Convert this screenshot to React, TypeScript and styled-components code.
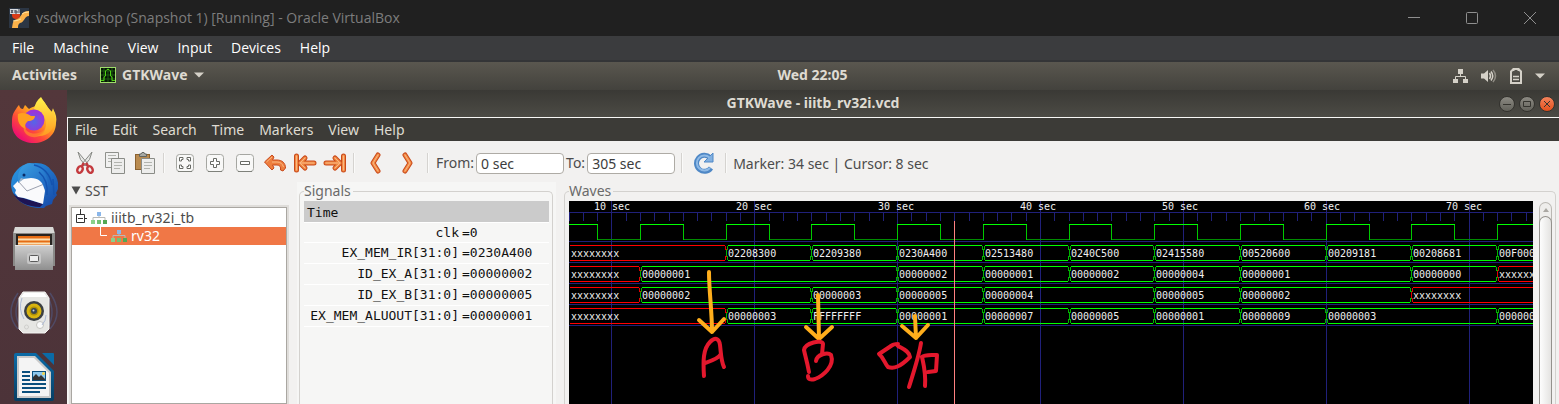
import React from 'react';
import styled, { createGlobalStyle, css } from 'styled-components';

const segoe = `"Open Sans", "Noto Sans", sans-serif`;
const ubuntu = `"Noto Sans", "Open Sans", sans-serif`;
const mono = `"DejaVu Sans Mono", monospace`;

const GlobalStyle = createGlobalStyle`
  * { box-sizing: border-box; }
  html, body { margin: 0; height: 100%; background: #f2f1f0; }
  body { overflow: hidden; }
  button, input { font: inherit; color: inherit; }
`;

const Desktop = styled.div`
  display: flex;
  flex-direction: column;
  height: 100vh;
  font-family: ${ubuntu};
  font-size: 14px;
`;

/* Host window */

const HostTitle = styled.header`
  display: flex;
  align-items: center;
  flex: none;
  height: 36px;
  padding-left: 9px;
  background: #202020;
  color: #7d7d7d;
  font: 14px/20px ${segoe};
`;

const HostName = styled.h1`
  flex: 1;
  margin: 0 0 0 7px;
  font: inherit;
`;

const HostControl = styled.button`
  display: grid;
  place-items: center;
  width: 58px;
  height: 34px;
  padding: 0;
  border: 0;
  background: none;
  color: #8f8f8f;
`;

const HostMenu = styled.nav`
  display: flex;
  align-items: center;
  flex: none;
  gap: 19px;
  height: 26px;
  padding: 0 12px;
  background: #3b3c3e;
  border-bottom: 2px solid #343537;
  color: #fff;
  font: 14px/20px ${segoe};
`;

const MenuButton = styled.button`
  padding: 0;
  border: 0;
  background: none;
  line-height: 20px;
`;

/* GNOME top panel */

const Panel = styled.div`
  display: flex;
  align-items: center;
  flex: none;
  height: 28px;
  background: linear-gradient(#5a574f, #43423d);
  color: #dfdbd2;
  font-weight: 700;
`;

const PanelStart = styled.div`
  display: flex;
  align-items: center;
  flex: 1 1 80px;
  gap: 23px;
  padding-left: 12px;
`;

const PanelButton = styled.button`
  display: flex;
  align-items: center;
  gap: 6px;
  padding: 0;
  border: 0;
  background: none;
  line-height: 18px;
  padding-bottom: 2px;
`;

const PanelEnd = styled.div`
  display: flex;
  align-items: center;
  justify-content: flex-end;
  flex: 1 1 14px;
  gap: 13px;
  padding-right: 14px;
`;

const Workspace = styled.div`
  display: flex;
  flex: 1;
  min-height: 0;
`;

const Launcher = styled.nav`
  display: flex;
  flex-direction: column;
  align-items: center;
  flex: none;
  gap: 16px;
  width: 67px;
  padding-top: 7px;
  background: linear-gradient(#53373b, #4c3339);
  overflow: hidden;
`;

const LaunchButton = styled.button`
  flex: none;
  width: 48px;
  height: 48px;
  padding: 0;
  border: 0;
  background: none;
`;

/* Application window */

const Window = styled.main`
  display: flex;
  flex-direction: column;
  flex: 1;
  min-width: 0;
`;

const TitleBar = styled.div`
  display: flex;
  align-items: center;
  flex: none;
  height: 27px;
  padding-right: 4px;
  background: linear-gradient(#3a3935, #4c4b45);
`;

const WindowTitle = styled.h2`
  flex: 1;
  margin: 0;
  padding: 0 0 2px 64px;
  color: #dfdbd2;
  font: 700 14px/20px ${ubuntu};
  text-align: center;
`;

const RoundButton = styled.button<{ $close?: boolean }>`
  display: grid;
  place-items: center;
  width: 16px;
  height: 16px;
  margin-left: 4px;
  padding: 0;
  border: 1px solid #33322e;
  border-radius: 50%;
  background: ${p => (p.$close ? 'linear-gradient(#f4835c, #e2501c)' : 'linear-gradient(#8b8982, #63625b)')};
  color: #35342f;
`;

const Client = styled.div`
  display: flex;
  flex-direction: column;
  flex: 1;
  min-height: 0;
  border: solid #f8f8f6;
  border-width: 1px 0 0 1px;
  background: #f2f1f0;
  color: #4c4c4c;
`;

const AppMenu = styled.nav`
  display: flex;
  align-items: center;
  flex: none;
  gap: 15px;
  height: 23px;
  padding-left: 7px;
  background: #3c3b37;
  color: #dfdbd2;
`;

const Toolbar = styled.div`
  display: flex;
  align-items: center;
  flex: none;
  height: 41px;
  padding: 3px 0 0 2px;
`;

const ToolButton = styled.button<{ $wide?: boolean }>`
  display: grid;
  place-items: center;
  flex: none;
  width: ${p => (p.$wide ? 32 : 30)}px;
  height: 30px;
  padding: 0;
  border: 0;
  background: none;
`;

const Divider = styled.span<{ $spaced?: boolean }>`
  flex: none;
  width: 2px;
  height: 20px;
  margin: ${p => (p.$spaced ? '0 6px' : '0 5px 0 3px')};
  border-left: 1px solid #d5d3d0;
  border-right: 1px solid #fafaf9;
`;

const RangeLabel = styled.label`
  display: flex;
  align-items: center;
  margin-left: 2px;
  line-height: 20px;
`;

const RangeInput = styled.input`
  width: 88px;
  height: 21px;
  margin-left: 2px;
  padding: 0 4px;
  border: 1px solid #aeaba5;
  border-radius: 4px;
  background: #fff;
  color: #3c3c3c;
  outline: none;
`;

const Status = styled.output`
  white-space: pre;
`;

const Panes = styled.div`
  display: flex;
  flex: 1;
  min-height: 0;
`;

const TreePane = styled.section`
  display: flex;
  flex-direction: column;
  flex: none;
  width: 229px;
  padding: 0 10px 0 3px;
`;

const TreeHeading = styled.button`
  display: flex;
  align-items: center;
  gap: 4px;
  height: 19px;
  padding: 0 0 2px;
  border: 0;
  background: none;
`;

const Tree = styled.ul`
  flex: 1;
  margin: 6px 0 0;
  padding: 1px 0 0;
  border: 1px solid #aaa7a2;
  outline: 2px solid #dfddda;
  background: #fff;
  list-style: none;
`;

const TreeItem = styled.button<{ $selected?: boolean }>`
  display: flex;
  align-items: center;
  gap: 4px;
  width: 100%;
  height: 18px;
  padding: 0 0 0 4px;
  border: 0;
  background: none;
  line-height: 18px;
  ${p =>
    p.$selected &&
    css`
      padding-left: 27px;
      background: #f07746;
      color: #fff;
    `}
`;

const SignalPane = styled.section`
  display: flex;
  flex: none;
  width: 259px;
  padding: 0 3px 0 2px;
  background: #f6f6f5;
`;

const WavePane = styled.section`
  display: flex;
  flex: 1;
  min-width: 0;
  padding: 0 3px 0 8px;
`;

const Frame = styled.fieldset`
  flex: 1;
  min-width: 0;
  margin: 0;
  padding: 0 3px 0 4px;
  border: 1px solid #d3d1ce;
  border-bottom: 0;
  border-radius: 5px 5px 0 0;
`;

const Legend = styled.legend`
  height: 19px;
  padding: 0 2px 0 0;
  color: #6a6a6a;
  line-height: 17px;
`;

const SignalTable = styled.table`
  width: 100%;
  border-collapse: collapse;
  color: #111;
  font: 13px/18px ${mono};
`;

const TimeHead = styled.th`
  height: 21px;
  padding: 3px 3px 0;
  border-bottom: 1px solid #fff;
  background: #cbcbcb;
  font-weight: 400;
  text-align: left;
`;

const SignalRow = styled.tr<{ $first?: boolean }>`
  height: ${p => (p.$first ? 20 : 21)}px;
  border-bottom: 1px solid #fff;
`;

const SignalName = styled.th`
  width: 155px;
  padding: 0;
  font-weight: 400;
  text-align: right;
`;

const SignalValue = styled.td`
  padding: 0 0 0 3px;
`;

const WaveBody = styled.div`
  display: flex;
  height: calc(100vh - 201px);
`;

const Canvas = styled.svg`
  display: block;
  flex: 1;
  min-width: 0;
  height: 100%;
  background: #000;
`;

const ScrollTrack = styled.div`
  display: flex;
  flex-direction: column;
  flex: none;
  width: 13px;
  margin: 1px 0 0 6px;
  border: 1px solid #bbb8b3;
  border-bottom: 0;
  border-radius: 7px 7px 0 0;
  background: #eeedeb;
`;

const ScrollUp = styled.button`
  display: grid;
  place-items: center;
  height: 13px;
  padding: 0;
  border: 0;
  background: none;
`;

const ScrollThumb = styled.div`
  flex: 1;
  margin: 0 -1px;
  border: 1px solid #94918c;
  border-bottom: 0;
  border-radius: 7px 7px 0 0;
  background: linear-gradient(90deg, #fdfdfd, #e4e3e1);
`;

/* Wave data: each bus is a list of [start second, value] */

type Segment = [number, string];
const UNKNOWN = 'xxxxxxxx';
const END = 140;

const signals: { name: string; value: string; wave: Segment[] }[] = [
  { name: 'clk', value: '0', wave: [] },
  {
    name: 'EX_MEM_IR[31:0]',
    value: '0230A400',
    wave: [[0, UNKNOWN], [18, '02208300'], [24, '02209380'], [30, '0230A400'], [36, '02513480'], [42, '0240C500'],
      [48, '02415580'], [54, '00520600'], [60, '00209181'], [66, '00208681'], [72, '00F00000']],
  },
  {
    name: 'ID_EX_A[31:0]',
    value: '00000002',
    wave: [[0, UNKNOWN], [12, '00000001'], [30, '00000002'], [36, '00000001'], [42, '00000002'], [48, '00000004'],
      [54, '00000001'], [66, '00000000'], [72, UNKNOWN]],
  },
  {
    name: 'ID_EX_B[31:0]',
    value: '00000005',
    wave: [[0, UNKNOWN], [12, '00000002'], [24, '00000003'], [30, '00000005'], [36, '00000004'], [48, '00000005'],
      [54, '00000002'], [66, UNKNOWN]],
  },
  {
    name: 'EX_MEM_ALUOUT[31:0]',
    value: '00000001',
    wave: [[0, UNKNOWN], [18, '00000003'], [24, 'FFFFFFFF'], [30, '00000001'], [36, '00000007'], [42, '00000005'],
      [48, '00000001'], [54, '00000009'], [60, '00000003'], [72, '00000000']],
  },
];

/* Seven seconds of simulation take 100 pixels */
const xAt = (t: number) => Math.floor(42.9 + ((t - 10) * 100) / 7);
const range = (from: number, to: number, step: number) =>
  Array.from({ length: Math.floor((to - from) / step) + 1 }, (_, i) => from + i * step);

function Bus({ wave, top }: { wave: Segment[]; top: number }) {
  return (
    <g fill="none" shapeRendering="crispEdges">
      {wave.map(([start, value], i) => {
        const unknown = value === UNKNOWN;
        const left = i === 0 ? 1 : xAt(start) + 2;
        const right = i + 1 < wave.length ? xAt(wave[i + 1][0]) - 1 : xAt(END);
        const before = i > 0 ? wave[i - 1][1] : '';
        const x = xAt(start);
        return (
          <g key={start}>
            <path d={`M${left} ${top + 0.5}H${right}M${left} ${top + 15.5}H${right}`} stroke={unknown ? '#ff0000' : '#00ff00'} />
            {i > 0 && (
              <>
                <path
                  d={`M${x - 0.5} ${top + 1}v4M${x + 0.5} ${top + 4}v8M${x - 0.5} ${top + 11}v4`}
                  stroke={before === UNKNOWN ? '#e00000' : '#00b400'}
                />
                <path
                  d={`M${x + 1.5} ${top + 1}v4M${x + 0.5} ${top + 5}v6M${x + 1.5} ${top + 11}v4`}
                  stroke={unknown ? '#e00000' : '#00b400'}
                />
              </>
            )}
          </g>
        );
      })}
    </g>
  );
}

function Waves() {
  const clock = range(6, END, 6);
  return (
    <Canvas role="img" aria-label="Waveforms from 7 sec to 74 sec">
      <g stroke="#20207a" shapeRendering="crispEdges">
        <path d={`M0 11.5H${xAt(END)}`} />
        {range(7, END, 1).map(t => (
          <path key={t} d={`M${xAt(t) + 0.5} 12v8`} />
        ))}
        {range(10, END, 10).map(t => (
          <path key={t} d={`M${xAt(t) + 0.5} 0v2000`} />
        ))}
        {[40, 61, 82, 103, 124].map(y => (
          <path key={y} d={`M0 ${y + 0.5}H${xAt(END)}`} />
        ))}
      </g>
      <g fill="none" shapeRendering="crispEdges">
        {clock.map(t => (
          <g key={t}>
            <path d={`M${xAt(t + 3) + 0.5} 38.5H${xAt(t + 6)}`} stroke="#008c00" />
            <path d={`M${xAt(t) + 0.5} 24V39M${xAt(t + 3) + 0.5} 24V39`} stroke="#00c800" />
            <path d={`M${xAt(t)} 23.5H${xAt(t + 3) + 1}`} stroke="#00ff00" />
          </g>
        ))}
      </g>
      {signals.slice(1).map((s, i) => (
        <Bus key={s.name} wave={s.wave} top={44 + i * 21} />
      ))}
      <path d={`M${xAt(34) + 0.5} 20v2000`} stroke="#ff8080" shapeRendering="crispEdges" />
      <g fill="#f0f0f0" fontFamily={mono} fontSize="10">
        {range(10, 70, 10).map(t => (
          <text key={t} x={25 + (t - 10) * 14.2} y="9">{t} sec</text>
        ))}
        {signals.slice(1).map((s, i) =>
          s.wave.map(([start, value]) => (
            <text key={s.name + start} x={start === 0 ? 2 : xAt(start) + 2} y={56 + i * 21}>{value}</text>
          )),
        )}
      </g>
      <g fill="none" stroke="#ffae1c" strokeWidth="4" strokeLinecap="round" strokeLinejoin="round">
        <path d="M140 71C140 90 143 110 143 131M130 119L143 131L155 118" />
        <path d="M249 94L250 138M237 126L250 138L263 126" />
        <path d="M346 115L347 137M333 125L347 137L359 124" />
      </g>
      <g fill="none" stroke="#e4182d" strokeWidth="4" strokeLinecap="round" strokeLinejoin="round">
        <path d="M135 175C134 160 134 148 141 141C146 136 150 137 151 144C152 152 152 160 155 166M136 162C142 160 149 158 152 153" />
        <path d="M247 160C248 153 259 151 262 154C266 165 254 175 246 178Q239 180 239 175M240 171C238 160 236 154 235 149C236 142 253 138 254 143L253 153" />
        <path d="M329 143Q324 143 322 145L310 153C315 157 316 163 319 166C325 168 331 166 341 156C340 150 334 148 329 145M352 142C350 155 345 170 340 186M356 185C357 172 355 165 353 156C356 153 363 154 368 154L367 170L359 171" />
      </g>
    </Canvas>
  );
}

/* Icons */

const VBoxIcon = () => (
  <svg width="20" height="20" viewBox="0 0 20 20">
    <rect width="20" height="20" fill="#2c3644" />
    <circle cx="7" cy="7" r="4" fill="#d93c18" />
    <path d="M3 20C4 14 4 12 8 11C13 10 11 3 20 3V8C15 8 16 14 11 15C9 16 9 18 9 20Z" fill="#fbb24a" />
    <path d="M4 13Q8 13 12 11M13 6Q15 4 20 4" fill="none" stroke="#ffe2a0" />
    <rect x="1" y="1" width="10" height="5" fill="#d8dbe0" />
    <path d="M2 2l2 3M4 2L2 5M6 2v3h2V3H6M10 1v4" stroke="#40454e" fill="none" />
  </svg>
);

const AppIcon = () => (
  <svg width="16" height="16" viewBox="0 0 16 16">
    <rect x=".5" y=".5" width="15" height="15" fill="#061406" stroke="#9fdc6b" />
    <path d="M4 1v14M8 1v14M12 1v14M1 4h14M1 8h14M1 12h14" stroke="#1d5c10" />
    <path d="M1 13.500H4V10L5.500 9V4L7 2.500H9L10.500 4V9L12 10V13.500H15" fill="none" stroke="#4ed312" />
  </svg>
);

const Caret = () => (
  <svg width="10" height="6" viewBox="0 0 10 6"><path d="M0 0.500H10L5 5.500Z" fill="#d5d1c8" /></svg>
);

const NetworkIcon = () => (
  <svg width="15" height="16" viewBox="0 0 15 16" fill="#d5d1c8">
    <path d="M5 1h5v5H5zM0 11h5v4H0zM10 11h5v4h-5z" />
    <path d="M7.500 6v2.500M2.500 11V8.500h10V11" fill="none" stroke="#d5d1c8" />
  </svg>
);

const SoundIcon = () => (
  <svg width="16" height="16" viewBox="0 0 16 16" fill="none" strokeWidth="1.500">
    <path d="M0 5.500H3L7 2V14L3 10.500H0Z" fill="#d5d1c8" />
    <path d="M8.500 5Q10.500 8 8.500 11" stroke="#d5d1c8" />
    <path d="M10 3.500Q13.500 8 10 12.500" stroke="#d5d1c8" />
    <path d="M12 2Q17 8 12 14" stroke="#8e8b83" />
  </svg>
);

const BatteryIcon = () => (
  <svg width="12" height="16" viewBox="0 0 12 16" fill="none" stroke="#d5d1c8">
    <path d="M1 3.500L2.500 2H3.500V1H8.500V2H9.500L11 3.500V15H1Z" strokeWidth="2" />
    <path d="M3 8.500h6M3 11.500h6" strokeWidth="1.500" />
  </svg>
);

const FirefoxIcon = () => (
  <svg width="48" height="48" viewBox="0 0 48 48">
    <defs>
      <linearGradient id="ffBody" x1=".85" y1=".1" x2=".2" y2=".9">
        <stop offset="0" stopColor="#fff14a" /><stop offset=".4" stopColor="#ffa020" />
        <stop offset=".7" stopColor="#ff4a38" /><stop offset="1" stopColor="#ee0f70" />
      </linearGradient>
      <radialGradient id="ffGlobe" cx=".5" cy=".6"><stop offset="0" stopColor="#5466e8" /><stop offset="1" stopColor="#9a35d8" /></radialGradient>
      <linearGradient id="ffTail" x1="0" y1="0" x2="0" y2="1"><stop offset="0" stopColor="#fff34a" /><stop offset="1" stopColor="#ff9a22" /></linearGradient>
    </defs>
    <path d="M6 12C7 10 8 9 9 8C10 11 11 12 13 12L15 8C17 10 18 11 19 12C23 9 28 10 31 2C36 5 37 11 42 15L43 12C46 17 47 21 46 26C46 38 36 46 24 46C11 46 1 38 2 25C2 19 3 16 6 12Z" fill="url(#ffBody)" />
    <path d="M31 0C27 3 25 7 24 12C32 14 36 20 36 27C36 33 32 37 27 39C38 40 45 32 45 22C45 19 44 16 43 11L42 15C37 10 35 6 31 0Z" fill="url(#ffTail)" />
    <circle cx="24" cy="23" r="10.500" fill="url(#ffGlobe)" />
    <path d="M8 17C12 15 17 16 21 19L25 19C25 22 22 24 18 24C16 26 14 28 16 32C10 30 7 25 8 17Z" fill="#ffa01f" />
    <path d="M14 29C17 38 28 39 35 32C34 40 23 43 16 37C14 35 13 32 14 29Z" fill="#ff8a2b" opacity=".7" />
  </svg>
);

const ThunderbirdIcon = () => (
  <svg width="48" height="48" viewBox="0 0 48 48">
    <defs>
      <linearGradient id="tbBody" x1="0" y1="0" x2="1" y2="1"><stop offset="0" stopColor="#2a9ae4" /><stop offset="1" stopColor="#1646a6" /></linearGradient>
      <linearGradient id="tbHead" x1="0" y1="0" x2="1" y2="1"><stop offset="0" stopColor="#3aa2e2" /><stop offset="1" stopColor="#1d62c0" /></linearGradient>
    </defs>
    <path d="M1 24C1 18 3 13 7 9C10 5 15 3 18 3C30 0 38 4 41 9C47 14 49 22 48 28L46 32L47 34L43 39L42 43L36 45L34 47H28C15 46 2 38 1 24Z" fill="url(#tbBody)" />
    <path d="M3 32L6 35L33 43L30 46C18 46 7 41 3 32Z" fill="#1d1454" />
    <path d="M3 25L8 20L12 17L30 17L33 22L35 30L33 43L14 37L8 36L5 32L6 29Z" fill="#fafafc" />
    <path d="M8 20L17 30L33 23.500" fill="none" stroke="#9a9fae" />
    <path d="M8 19C7 10 13 2 20 2C31 4 40 13 38 30L34 27C33 21 28 17 21 17L13 18L8 22Z" fill="url(#tbHead)" />
    <path d="M24 4C33 6 40 13 42 24M29 11C36 17 38 24 37 34M43 18L44 34" fill="none" stroke="#1453b0" strokeWidth="1.500" />
    <path d="M11 17L8 22L14 18Z" fill="#9db3c9" /><circle cx="14" cy="14" r="1.500" fill="#0a2b66" />
  </svg>
);

const FilesIcon = () => (
  <svg width="48" height="48" viewBox="0 0 48 48">
    <defs><linearGradient id="cab" x1="0" y1="0" x2="0" y2="1"><stop offset="0" stopColor="#cfcfcf" /><stop offset="1" stopColor="#8f8f8f" /></linearGradient></defs>
    <path d="M5 2H43L45 8V41H3V8Z" fill="#8a8a88" />
    <path d="M5 2H43L44.500 8H3.500Z" fill="#d9d9d7" />
    <rect x="6" y="9" width="36" height="14" fill="#272320" />
    <rect x="8" y="11" width="32" height="11" fill="#e56c14" />
    <path d="M8 14.500H40M8 18.500H40" stroke="#fbe0b2" strokeWidth="2" />
    <path d="M5 20H43V45H5Z" fill="url(#cab)" />
    <path d="M5 20.500H43" stroke="#e6e6e6" />
    <rect x="17" y="28" width="14" height="11" rx="2" fill="#c6c6c6" />
    <rect x="19.500" y="30.500" width="9" height="6" rx="1" fill="#eee" stroke="#5a5a5a" />
  </svg>
);

const SpeakerIcon = () => (
  <svg width="48" height="48" viewBox="0 0 48 48">
    <g fill="none" stroke="#52669b" strokeWidth="1.500" opacity=".45">
      <path d="M8 4Q-6 24 8 40M11 6Q1 24 11 38M40 4Q54 24 40 40M38 8Q46 24 38 38" />
    </g>
    <path d="M13 3H35L39 9V40L35 44H13L9 40V9Z" fill="#e6e6e3" stroke="#f5f5f3" />
    <path d="M14 4H34L37 8H11Z" fill="#fff" />
    <circle cx="24" cy="22" r="10" fill="#3c4043" /><circle cx="24" cy="22" r="7.500" fill="#d8b40f" />
    <circle cx="24" cy="22" r="4.500" fill="#ae8f08" /><circle cx="24" cy="22" r="3" fill="#39454e" /><circle cx="23.500" cy="21.500" r="1" fill="#c6d2dd" />
    <circle cx="30" cy="36" r="3.500" fill="#fafafa" stroke="#c4c4c0" />
    <circle cx="16.500" cy="38" r="2" fill="none" stroke="#cfcfcc" />
    <path d="M12 9Q8 20 14 30M36 26Q36 32 32 36" fill="none" stroke="#93a7cf" opacity=".7" />
  </svg>
);

const WriterIcon = () => (
  <svg width="48" height="48" viewBox="0 0 48 48">
    <defs><linearGradient id="doc" x1="0" y1="0" x2="0" y2="1"><stop offset="0" stopColor="#0b6ba7" /><stop offset="1" stopColor="#063e63" /></linearGradient></defs>
    <path d="M6 0H26L44 18V46Q44 48 42 48H6Q4 48 4 46V2Q4 0 6 0Z" fill="url(#doc)" />
    <path d="M32 0H43Q44 0 44 1V12Z" fill="#0b6ba7" />
    <path d="M7 3H25L41 19V45H7Z" fill="#c9c9c9" /><path d="M9 5H24L39 20V43H9Z" fill="#f4f4f4" />
    <path d="M12 19h8M12 23h8M12 27h8M12 31h24M12 35h24M12 39h18" stroke="#0a4f7d" strokeWidth="2" />
    <rect x="22" y="18" width="14" height="10" fill="#0a4f7d" /><rect x="23" y="19" width="12" height="8" fill="#8ec9ee" />
    <circle cx="33.500" cy="20.500" r="1.500" fill="#f1d34d" /><path d="M23 27V24L26 21L29 24L31 22L35 26V27Z" fill="#333" />
  </svg>
);

const CutIcon = () => (
  <svg width="18" height="24" viewBox="0 0 18 24" fill="none">
    <path d="M2 1Q3 9 10 15L12 13Q7 7 2 1ZM16 1Q15 9 8 15L6 13Q11 7 16 1Z" fill="#e6e6e4" stroke="#888a85" />
    <path d="M8 12L6 15M10 12L12 15" stroke="#c43a3e" strokeWidth="2.500" />
    <ellipse cx="4" cy="18.500" rx="2.500" ry="3.500" transform="rotate(25 4 18.500)" stroke="#c43a3e" strokeWidth="2.500" />
    <ellipse cx="14" cy="18.500" rx="2.500" ry="3.500" transform="rotate(-25 14 18.500)" stroke="#c43a3e" strokeWidth="2.500" />
  </svg>
);

const PageStack = ({ clip }: { clip?: boolean }) => (
  <svg width="22" height="24" viewBox="0 0 22 24">
    {clip ? (
      <>
        <rect x="1.500" y="3.500" width="14" height="15" fill="#b98b50" stroke="#8a6130" />
        <path d="M5.500 5.500V3H7L8 1.500H10L11 3H12.500V5.500Z" fill="#a7a9a4" stroke="#62645f" />
      </>
    ) : (
      <>
        <path d="M1.500 1.500H14.500V16.500H1.500Z" fill="#f1f1f0" stroke="#8f918c" />
        <path d="M4 4.500h8M4 7.500h8M4 10.500h8" stroke="#b2b4af" />
      </>
    )}
    <path d="M7.500 7.500H20.500V22.500H7.500Z" fill="#ededec" stroke="#8a8c87" />
    <path d="M10 11.500h8M10 14.500h8M10 17.500h6" stroke="#b2b4af" />
  </svg>
);

const ZoomIcon = ({ kind }: { kind: 'fit' | 'in' | 'out' }) => (
  <svg width="20" height="20" viewBox="0 0 20 20" fill="none">
    <rect x="1.500" y="1.500" width="17" height="17" rx="3" fill="#f8f8f7" stroke="#a5a6a1" />
    <path d="M3 18.500h14" stroke="#7f817b" />
    <g stroke="#686a65" fill="#fff">
      {kind === 'fit' && <path d="M4.500 8V4.500H8V6.500H6.500V8ZM12 4.500h3.500V8H13.500V6.500H12ZM4.500 12v3.500H8V13.500H6.500V12ZM15.500 12v3.500H12V13.500H13.500V12Z" />}
      {kind === 'in' && <path d="M8.500 5.500H11.500V8.500H14.500V11.500H11.500V14.500H8.500V11.500H5.500V8.500H8.500Z" />}
      {kind === 'out' && <path d="M5.500 8.500h9v3h-9Z" />}
    </g>
  </svg>
);

const OrangeIcon = ({ d, width = 24 }: { d: string; width?: number }) => (
  <svg width={width} height="22" viewBox={`0 0 ${width} 22`} fill="none" strokeLinecap="round" strokeLinejoin="round">
    <path d={d} stroke="#c9491a" strokeWidth="5" />
    <path d={d} stroke="#f28b44" strokeWidth="3" />
    <path d={d} stroke="#f9b783" strokeWidth="1" />
  </svg>
);

const UndoIcon = () => (
  <svg width="24" height="22" viewBox="0 0 24 22" strokeLinejoin="round">
    <path d="M1.500 10L9 3L11 5L9.500 8H14C19 8 22.500 11 22.500 16L20 19L17.500 18C18 15 17 13 14 13H9.500L11 16L9 18Z" fill="#ee7f3f" stroke="#c9491a" />
    <path d="M3.500 10L9 5M9 10H14Q19 10 20.500 15" fill="none" stroke="#f9b783" />
  </svg>
);

const ReloadIcon = () => (
  <svg width="22" height="22" viewBox="0 0 22 22" fill="none">
    <path d="M17 5.500A8 8 0 1 0 18 16" stroke="#4f88c6" strokeWidth="5" />
    <path d="M20 1V10H11L14 7Z" fill="#82b0e0" stroke="#4f88c6" />
    <path d="M16.500 5.500A7.500 7.500 0 1 0 17 16" stroke="#8fbae6" strokeWidth="2" />
  </svg>
);

const ModuleIcon = () => (
  <svg width="16" height="14" viewBox="0 0 16 14">
    <path d="M8 4v3M2 9V6.500H14V9" fill="none" stroke="#b9bab7" />
    <path d="M6 1h4v4H6z" fill="#8bb7ea" /><path d="M0 9h4v4H0z" fill="#8bd18b" /><path d="M6 9h4v4H6z" fill="#74c174" /><path d="M12 9h4v4h-4z" fill="#54a854" />
  </svg>
);

const orangeShapes = {
  first: 'M3.500 4V18M12 6L7 11L12 16M7 11H21',
  last: 'M20.500 4V18M12 6L17 11L12 16M17 11H3',
  prev: 'M9 3L4 11L9 19',
  next: 'M4 3L9 11L4 19',
};

export default function App() {
  return (
    <Desktop>
      <GlobalStyle />
      <HostTitle>
        <VBoxIcon />
        <HostName>vsdworkshop (Snapshot 1) [Running] - Oracle VirtualBox</HostName>
        <HostControl aria-label="Minimize">
          <svg width="12" height="12" stroke="currentColor"><path d="M0 5.500h12" /></svg>
        </HostControl>
        <HostControl aria-label="Maximize">
          <svg width="12" height="12" fill="none" stroke="currentColor"><rect x=".5" y=".5" width="11" height="11" rx="1" /></svg>
        </HostControl>
        <HostControl aria-label="Close">
          <svg width="12" height="12" stroke="currentColor"><path d="M0 0L12 12M12 0L0 12" /></svg>
        </HostControl>
      </HostTitle>
      <HostMenu aria-label="Virtual machine">
        {['File', 'Machine', 'View', 'Input', 'Devices', 'Help'].map(m => <MenuButton key={m}>{m}</MenuButton>)}
      </HostMenu>
      <Panel>
        <PanelStart>
          <PanelButton>Activities</PanelButton>
          <PanelButton><AppIcon />GTKWave<Caret /></PanelButton>
        </PanelStart>
        <PanelButton>Wed 22:05</PanelButton>
        <PanelEnd><NetworkIcon /><SoundIcon /><BatteryIcon /><Caret /></PanelEnd>
      </Panel>
      <Workspace>
        <Launcher aria-label="Launcher">
          <LaunchButton aria-label="Firefox"><FirefoxIcon /></LaunchButton>
          <LaunchButton aria-label="Thunderbird"><ThunderbirdIcon /></LaunchButton>
          <LaunchButton aria-label="Files"><FilesIcon /></LaunchButton>
          <LaunchButton aria-label="Rhythmbox"><SpeakerIcon /></LaunchButton>
          <LaunchButton aria-label="LibreOffice Writer"><WriterIcon /></LaunchButton>
        </Launcher>
        <Window>
          <TitleBar>
            <WindowTitle>GTKWave - iiitb_rv32i.vcd</WindowTitle>
            <RoundButton aria-label="Minimize window"><svg width="8" height="8" stroke="currentColor"><path d="M0 4.500h8" /></svg></RoundButton>
            <RoundButton aria-label="Maximize window"><svg width="8" height="8" fill="none" stroke="currentColor"><path d="M.5 1.500h7v5h-7z" /></svg></RoundButton>
            <RoundButton $close aria-label="Close window"><svg width="6" height="6" stroke="currentColor"><path d="M0 0L6 6M6 0L0 6" /></svg></RoundButton>
          </TitleBar>
          <Client>
            <AppMenu aria-label="Application">
              {['File', 'Edit', 'Search', 'Time', 'Markers', 'View', 'Help'].map(m => <MenuButton key={m}>{m}</MenuButton>)}
            </AppMenu>
            <Toolbar>
              <ToolButton aria-label="Cut"><CutIcon /></ToolButton>
              <ToolButton aria-label="Copy"><PageStack /></ToolButton>
              <ToolButton aria-label="Paste"><PageStack clip /></ToolButton>
              <Divider />
              <ToolButton aria-label="Zoom fit"><ZoomIcon kind="fit" /></ToolButton>
              <ToolButton aria-label="Zoom in"><ZoomIcon kind="in" /></ToolButton>
              <ToolButton aria-label="Zoom out"><ZoomIcon kind="out" /></ToolButton>
              <ToolButton aria-label="Zoom undo"><UndoIcon /></ToolButton>
              <ToolButton aria-label="Zoom to start"><OrangeIcon d={orangeShapes.first} /></ToolButton>
              <ToolButton aria-label="Zoom to end"><OrangeIcon d={orangeShapes.last} /></ToolButton>
              <Divider />
              <ToolButton $wide aria-label="Previous edge"><OrangeIcon width={14} d={orangeShapes.prev} /></ToolButton>
              <ToolButton $wide aria-label="Next edge"><OrangeIcon width={14} d={orangeShapes.next} /></ToolButton>
              <Divider />
              <RangeLabel>From:<RangeInput defaultValue="0 sec" /></RangeLabel>
              <RangeLabel>To:<RangeInput defaultValue="305 sec" /></RangeLabel>
              <Divider $spaced />
              <ToolButton aria-label="Reload"><ReloadIcon /></ToolButton>
              <Divider $spaced />
              <Status>Marker: 34 sec | Cursor: 8 sec</Status>
            </Toolbar>
            <Panes>
              <TreePane>
                <TreeHeading>
                  <svg width="10" height="9"><path d="M0.500 0.500H9.500L5 8.500Z" fill="#4c4c4c" /></svg>SST
                </TreeHeading>
                <Tree>
                  <li>
                    <TreeItem>
                      <svg width="11" height="19" fill="none" stroke="#333"><path d="M.5 5.500h8v8h-8zM2 9.500h5M4.500 0v5M9 9.500h2" /></svg>
                      <ModuleIcon />iiitb_rv32i_tb
                    </TreeItem>
                  </li>
                  <li>
                    <TreeItem $selected>
                      <svg width="8" height="19" fill="none" stroke="#fff"><path d="M1.500 0v8.500H8" /></svg>
                      <ModuleIcon />rv32
                    </TreeItem>
                  </li>
                </Tree>
              </TreePane>
              <SignalPane>
                <Frame>
                  <Legend>Signals</Legend>
                  <SignalTable>
                    <thead><tr><TimeHead colSpan={2}>Time</TimeHead></tr></thead>
                    <tbody>
                      {signals.map((s, i) => (
                        <SignalRow key={s.name} $first={i === 0}>
                          <SignalName scope="row">{s.name}</SignalName>
                          <SignalValue>={s.value}</SignalValue>
                        </SignalRow>
                      ))}
                    </tbody>
                  </SignalTable>
                </Frame>
              </SignalPane>
              <WavePane>
                <Frame>
                  <Legend>Waves</Legend>
                  <WaveBody>
                    <Waves />
                    <ScrollTrack>
                      <ScrollUp aria-label="Scroll up"><svg width="6" height="4"><path d="M0 4L3 0L6 4Z" fill="#aaa7a2" /></svg></ScrollUp>
                      <ScrollThumb />
                    </ScrollTrack>
                  </WaveBody>
                </Frame>
              </WavePane>
            </Panes>
          </Client>
        </Window>
      </Workspace>
    </Desktop>
  );
}
